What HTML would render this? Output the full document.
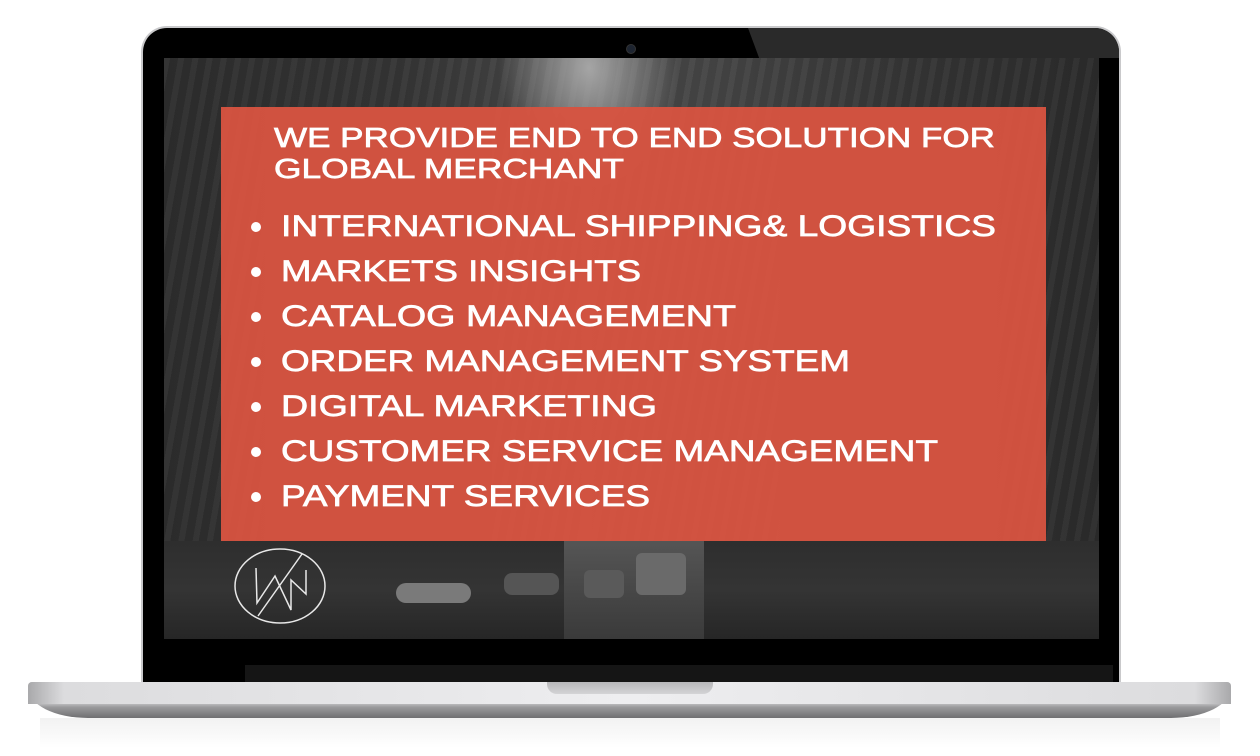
<!DOCTYPE html>
<html><head><meta charset="utf-8"><style>
html,body{margin:0;padding:0;background:#fff;width:1260px;height:756px;overflow:hidden;position:relative}
.a{position:absolute}
</style></head><body>
<!-- lid -->
<div class="a" style="left:141px;top:26px;width:980px;height:660px;border-radius:26px 26px 0 0;background:#c9c9cb"></div>
<div class="a" style="left:143px;top:28px;width:976px;height:656px;border-radius:24px 24px 0 0;background:#000"></div>
<div class="a" style="left:748px;top:28px;width:371px;height:30px;background:#2a2a2a;clip-path:polygon(0 0,100% 0,100% 100%,3% 100%);border-radius:0 24px 0 0;"></div>
<div class="a" style="left:245px;top:665px;width:868px;height:17px;background:#151515"></div>
<div class="a" style="left:626px;top:44px;width:8px;height:8px;border-radius:50%;background:#1d2430;border:1px solid #333"></div>
<!-- screen -->
<div class="a" style="left:164px;top:58px;width:935px;height:581px;overflow:hidden;background:
radial-gradient(ellipse 90px 120px at 425px 10px,#a5a5a5,rgba(150,150,150,0) 100%),
repeating-linear-gradient(100deg,rgba(255,255,255,0.03) 0 6px,rgba(0,0,0,0.05) 6px 14px),
linear-gradient(90deg,#2d2d2d 0%,#353535 25%,#4a4a4a 45%,#444 60%,#353535 80%,#2b2b2b 100%)">
 <div class="a" style="left:0;top:483px;width:935px;height:98px;background:linear-gradient(180deg,#2e2e2e,#343434 50%,#262626)"></div>
 <div class="a" style="left:400px;top:483px;width:140px;height:98px;background:linear-gradient(180deg,#555,#3a3a3a)"></div>
 <div class="a" style="left:232px;top:525px;width:75px;height:20px;border-radius:10px;background:#7a7a7a"></div>
 <div class="a" style="left:340px;top:515px;width:55px;height:22px;border-radius:8px;background:#555"></div>
 <div class="a" style="left:420px;top:512px;width:40px;height:28px;border-radius:6px;background:#5a5a5a"></div>
 <div class="a" style="left:472px;top:495px;width:50px;height:42px;border-radius:6px;background:#6a6a6a"></div>
</div>
<!-- red box -->
<div class="a" style="left:221px;top:107px;width:825px;height:434px;background:#d65341;opacity:.96"></div>
<svg class="a" style="left:0;top:0" width="1260" height="756">
<g fill="#fff" stroke="#fff" stroke-width="0.7" font-family="Liberation Sans, sans-serif">
<text x="274" y="147" font-size="28" textLength="721" lengthAdjust="spacingAndGlyphs">WE PROVIDE END TO END SOLUTION FOR</text>
<text x="274" y="178" font-size="28" textLength="350" lengthAdjust="spacingAndGlyphs">GLOBAL MERCHANT</text>
<g font-size="30">
<text x="281" y="236" textLength="715" lengthAdjust="spacingAndGlyphs">INTERNATIONAL SHIPPING&amp; LOGISTICS</text>
<text x="281" y="281" textLength="360" lengthAdjust="spacingAndGlyphs">MARKETS INSIGHTS</text>
<text x="281" y="326" textLength="455" lengthAdjust="spacingAndGlyphs">CATALOG MANAGEMENT</text>
<text x="281" y="371" textLength="569" lengthAdjust="spacingAndGlyphs">ORDER MANAGEMENT SYSTEM</text>
<text x="281" y="416" textLength="376" lengthAdjust="spacingAndGlyphs">DIGITAL MARKETING</text>
<text x="281" y="461" textLength="657" lengthAdjust="spacingAndGlyphs">CUSTOMER SERVICE MANAGEMENT</text>
<text x="281" y="506" textLength="369" lengthAdjust="spacingAndGlyphs">PAYMENT SERVICES</text>
</g>
</g>
<g fill="#fff">
<circle cx="256" cy="227" r="5"/><circle cx="256" cy="272" r="5"/><circle cx="256" cy="317" r="5"/><circle cx="256" cy="362" r="5"/><circle cx="256" cy="407" r="5"/><circle cx="256" cy="452" r="5"/><circle cx="256" cy="497" r="5"/>
</g>
<g fill="none" stroke="#e8e8e8" stroke-width="1.5">
<ellipse cx="280" cy="586" rx="45" ry="37"/>
<path d="M256 568 L257 603 L275 576 L291 610 L291 580 L306 594 L306 570 M258 616 L302 554"/>
</g>
</svg>
<!-- base -->
<div class="a" style="left:28px;top:682px;width:1203px;height:36px;border-radius:4px 4px 60px 60px / 4px 4px 30px 30px;background:linear-gradient(180deg,#d7d7d9 0%,#ececee 30%,#d0d0d2 55%,#9a9a9c 70%,#6f6f71 100%)"></div>
<div class="a" style="left:28px;top:682px;width:1203px;height:22px;background:linear-gradient(90deg,#a9a9ab 0%,#dcdcde 3%,#eeeef0 50%,#dcdcde 97%,#a9a9ab 100%);border-radius:4px 4px 0 0"></div>
<div class="a" style="left:547px;top:682px;width:166px;height:12px;border-radius:0 0 10px 10px;background:linear-gradient(180deg,#b8b8ba,#d4d4d6)"></div>
<div class="a" style="left:40px;top:718px;width:1180px;height:30px;background:linear-gradient(180deg,#ececec,#fff);opacity:.7"></div>
</body></html>
